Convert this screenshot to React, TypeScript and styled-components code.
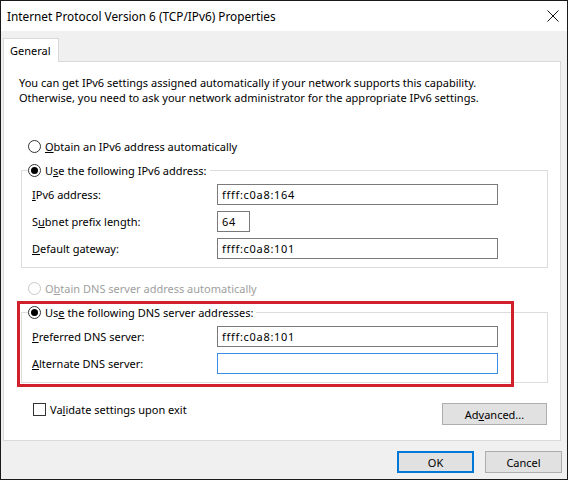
import { ReactNode } from "react";
import styled, { createGlobalStyle } from "styled-components";

const GlobalStyle = createGlobalStyle`
  html, body {
    margin: 0;
    padding: 0;
    background: #ffffff;
  }
  body {
    font-family: "Segoe UI", "Noto Sans", "Open Sans", sans-serif;
    font-size: 11px;
    color: #000000;
  }
  * {
    box-sizing: border-box;
  }
`;

const Window = styled.div`
  width: 568px;
  height: 480px;
  border: 1px solid #1a1a1a;
  display: flex;
  flex-direction: column;
  background: #f0f0f0;
`;

const TitleBar = styled.div`
  height: 30px;
  background: #ffffff;
  display: flex;
  align-items: center;
  justify-content: space-between;
  padding-left: 6px;
  padding-right: 1px;
`;

const Title = styled.span`
  font-size: 11.8px;
  color: #000000;
`;

const CloseButton = styled.div`
  width: 26px;
  height: 30px;
  display: flex;
  align-items: center;
  justify-content: center;
  svg {
    display: block;
  }
`;

const Body = styled.div`
  flex: 1;
  display: flex;
  flex-direction: column;
  padding: 7px 6px 0 2px;
`;

const TabStrip = styled.div`
  display: flex;
  height: 23px;
`;

const Tab = styled.div`
  background: #ffffff;
  border: 1px solid #d9d9d9;
  border-bottom: none;
  padding: 0 7px 0 6px;
  display: flex;
  align-items: center;
  position: relative;
  z-index: 1;
  margin-bottom: -1px;
  height: 24px;
`;

const Panel = styled.div`
  position: relative;
  background: #ffffff;
  border: 1px solid #d9d9d9;
  padding: 13px 12px 15px 15px;
  display: flex;
  flex-direction: column;
`;

const Description = styled.p`
  margin: 0;
  line-height: 15px;
`;

const RadioRow = styled.label<{ $disabled?: boolean; $indent?: number; $top?: number }>`
  display: flex;
  align-items: center;
  gap: 4px;
  height: 16px;
  margin-left: ${(p) => p.$indent ?? 0}px;
  margin-top: ${(p) => p.$top ?? 0}px;
  color: ${(p) => (p.$disabled ? "#a0a0a0" : "#000000")};
  white-space: nowrap;
`;

const RadioCircle = styled.span<{ $checked?: boolean; $disabled?: boolean }>`
  width: 13px;
  height: 13px;
  border-radius: 50%;
  border: 1px solid ${(p) => (p.$disabled ? "#c8c8c8" : "#333333")};
  background: #ffffff;
  display: flex;
  align-items: center;
  justify-content: center;
  flex: none;
  &::after {
    content: "";
    width: 7px;
    height: 7px;
    border-radius: 50%;
    background: #000000;
    display: ${(p) => (p.$checked ? "block" : "none")};
  }
`;

const GroupBox = styled.fieldset<{ $top: number }>`
  margin: ${(p) => p.$top}px 0 0 2px;
  padding: 6px 8px 8px 6px;
  border: 1px solid #dcdcdc;
  min-width: 0;
  display: flex;
  flex-direction: column;
  gap: 6px;
`;

const Legend = styled.legend`
  padding: 0 3px 0 0;
`;

const FieldRow = styled.div`
  display: grid;
  grid-template-columns: 185px auto;
  align-items: center;
  padding-left: 4px;
`;

const TextBox = styled.div<{ $width: number; $focused?: boolean }>`
  width: ${(p) => p.$width}px;
  height: 21px;
  border: 1px solid ${(p) => (p.$focused ? "#3a8ee6" : "#7a7a7a")};
  background: #ffffff;
  display: flex;
  align-items: center;
  padding-left: 4px;
  letter-spacing: 0.7px;
`;

const Highlight = styled.div`
  position: absolute;
  left: 13px;
  top: 239px;
  width: 497px;
  height: 86px;
  border: 3px solid #d0202c;
  pointer-events: none;
`;

const BottomRow = styled.div`
  display: flex;
  justify-content: space-between;
  align-items: flex-start;
  margin-top: 19px;
  padding-right: 1px;
`;

const CheckRow = styled.label`
  display: flex;
  align-items: center;
  gap: 4px;
  margin-left: 14px;
  height: 14px;
`;

const CheckBox = styled.span`
  width: 13px;
  height: 13px;
  border: 1px solid #333333;
  background: #ffffff;
  flex: none;
`;

const Button = styled.div<{ $primary?: boolean; $width: number }>`
  width: ${(p) => p.$width}px;
  height: 22px;
  background: #e1e1e1;
  border: ${(p) => (p.$primary ? "2px solid #0078d7" : "1px solid #adadad")};
  display: flex;
  align-items: center;
  justify-content: center;
  margin-top: 1px;
`;

const Footer = styled.div`
  display: flex;
  justify-content: flex-end;
  gap: 11px;
  padding-top: 9px;
  margin-right: -1px;
`;

type RadioProps = {
  label: ReactNode;
  checked?: boolean;
  disabled?: boolean;
  indent?: number;
  top?: number;
};

const Radio = ({ label, checked, disabled, indent, top }: RadioProps) => (
  <RadioRow $disabled={disabled} $indent={indent} $top={top}>
    <RadioCircle $checked={checked} $disabled={disabled} />
    <span>{label}</span>
  </RadioRow>
);

const Field = ({
  label,
  value,
  width = 281,
  focused,
}: {
  label: ReactNode;
  value?: string;
  width?: number;
  focused?: boolean;
}) => (
  <FieldRow>
    <span>{label}</span>
    <TextBox $width={width} $focused={focused}>
      {value}
    </TextBox>
  </FieldRow>
);

export default function App() {
  return (
    <>
      <GlobalStyle />
      <Window>
        <TitleBar>
          <Title>Internet Protocol Version 6 (TCP/IPv6) Properties</Title>
          <CloseButton>
            <svg width="12" height="12" viewBox="0 0 12 12">
              <path d="M0.5 0.5 L11.5 11.5 M11.5 0.5 L0.5 11.5" stroke="#111" strokeWidth="1" />
            </svg>
          </CloseButton>
        </TitleBar>
        <Body>
          <TabStrip>
            <Tab>General</Tab>
          </TabStrip>
          <Panel>
            <Description>
              You can get IPv6 settings assigned automatically if your network supports this capability.
              <br />
              Otherwise, you need to ask your network administrator for the appropriate IPv6 settings.
            </Description>

            <Radio
              indent={9}
              top={33}
              label={
                <>
                  <u>O</u>btain an IPv6 address automatically
                </>
              }
            />
            <GroupBox $top={8}>
              <Legend>
                <Radio
                  checked
                  label={
                    <>
                      U<u>s</u>e the following IPv6 address:
                    </>
                  }
                />
              </Legend>
              <Field
                label={
                  <>
                    <u>I</u>Pv6 address:
                  </>
                }
                value="ffff:c0a8:164"
              />
              <Field
                label={
                  <>
                    S<u>u</u>bnet prefix length:
                  </>
                }
                value="64"
                width={33}
              />
              <Field
                label={
                  <>
                    <u>D</u>efault gateway:
                  </>
                }
                value="ffff:c0a8:101"
              />
            </GroupBox>

            <Radio
              disabled
              indent={9}
              top={12}
              label={
                <>
                  O<u>b</u>tain DNS server address automatically
                </>
              }
            />
            <GroupBox $top={8}>
              <Legend>
                <Radio
                  checked
                  label={
                    <>
                      Us<u>e</u> the following DNS server addresses:
                    </>
                  }
                />
              </Legend>
              <Field
                label={
                  <>
                    <u>P</u>referred DNS server:
                  </>
                }
                value="ffff:c0a8:101"
              />
              <Field
                label={
                  <>
                    <u>A</u>lternate DNS server:
                  </>
                }
                focused
              />
            </GroupBox>

            <BottomRow>
              <CheckRow>
                <CheckBox />
                <span>
                  Va<u>l</u>idate settings upon exit
                </span>
              </CheckRow>
              <Button $width={105}>
                <span>
                  Ad<u>v</u>anced...
                </span>
              </Button>
            </BottomRow>

            <Highlight />
          </Panel>
          <Footer>
            <Button $primary $width={77}>
              OK
            </Button>
            <Button $width={77}>Cancel</Button>
          </Footer>
        </Body>
      </Window>
    </>
  );
}
